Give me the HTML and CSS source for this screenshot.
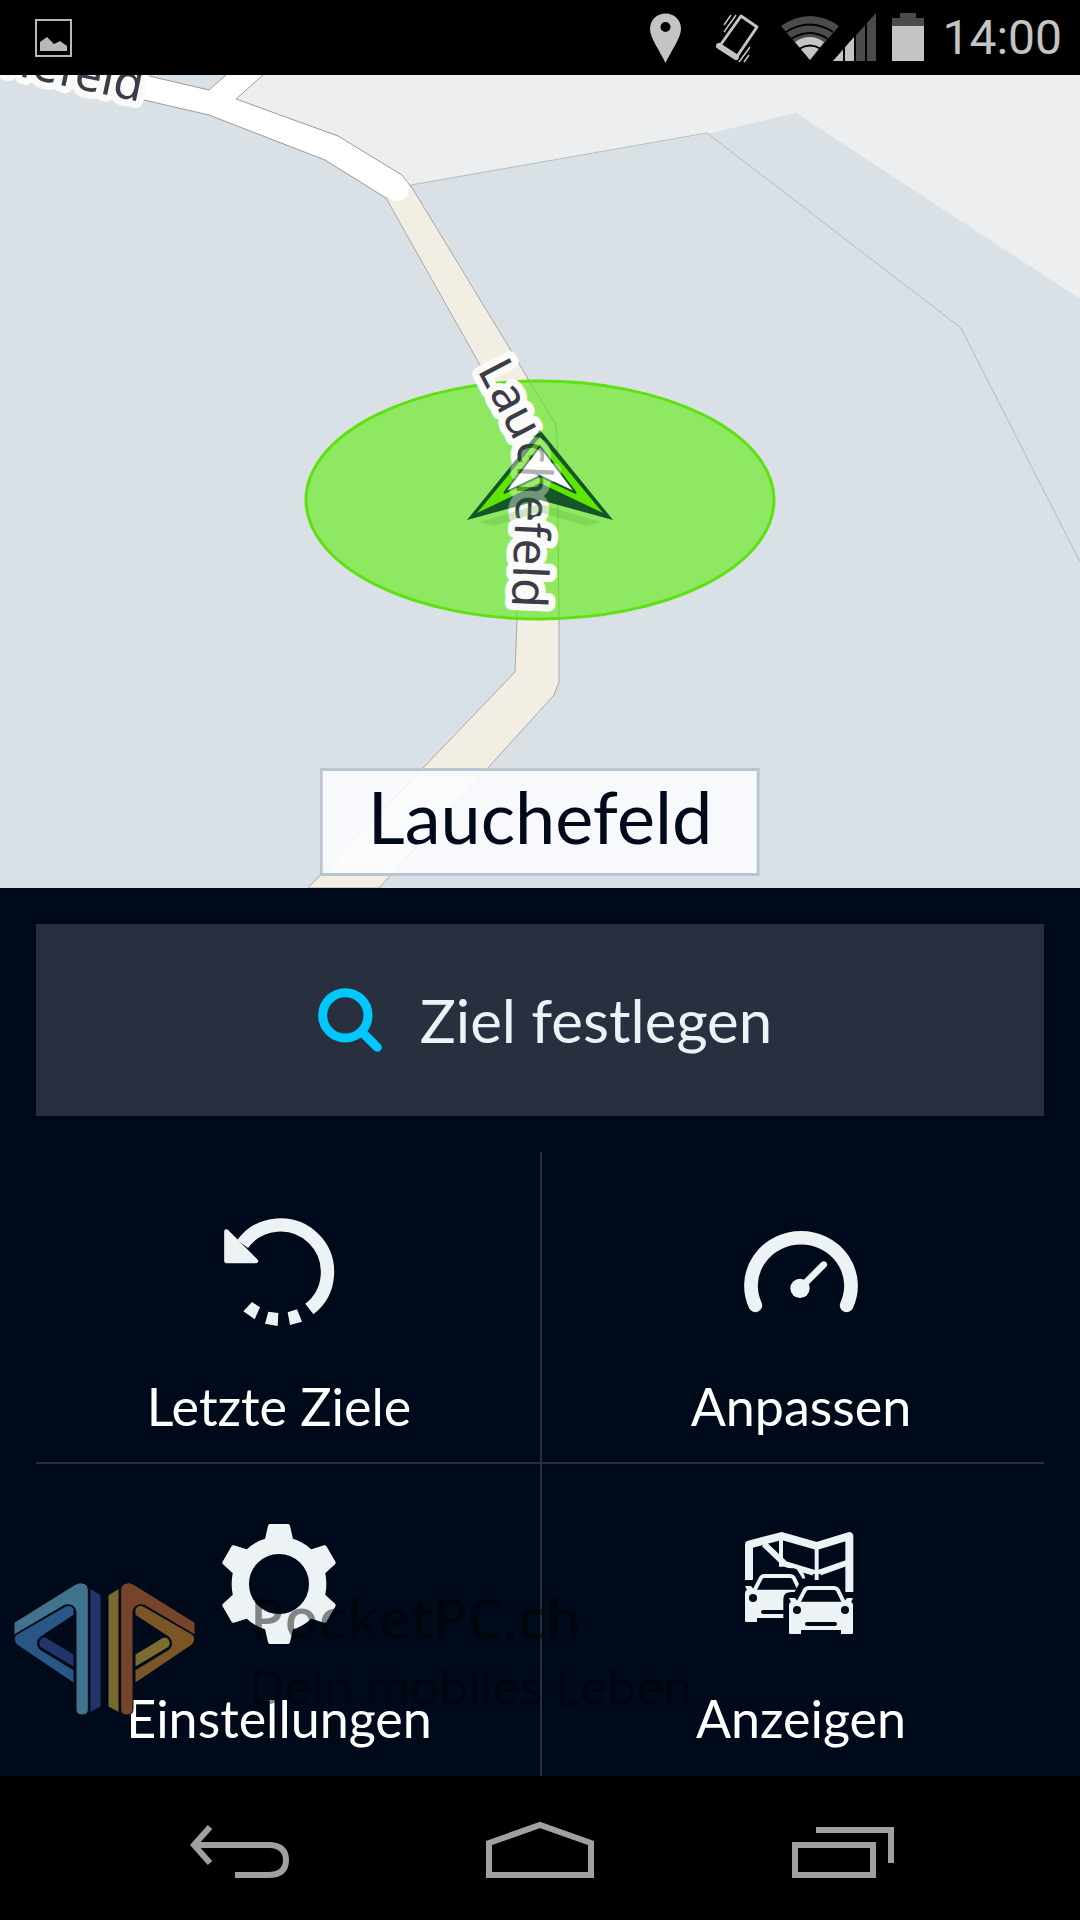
FILE: index.html
```html
<!DOCTYPE html>
<html lang="de">
<head>
  <meta charset="UTF-8">
  <meta name="viewport" content="width=device-width, initial-scale=1.0">
  <title>Lauchefeld</title>
  <link rel="stylesheet" href="styles.css">
</head>
<body>

  <!-- Status bar -->
  <header class="status-bar">
    <svg class="status-image" viewBox="35 19 38 38" width="38" height="38">
      <path d="M36 20h35v36H36z" fill="none" stroke="#b8b8b8" stroke-width="2"/>
      <path d="M40 51V42l7-5 7 7 6-3 7 5v5z" fill="#b8b8b8"/>
    </svg>
    <div class="status-icons">
      <svg viewBox="650 12 31 50" width="31" height="50">
        <path fill-rule="evenodd" d="M665.500 12.500c-9 0-15.500 6.500-15.500 15.500 0 9 10 22 15.500 34 5.500-12 15.500-25 15.500-34 0-9-6.500-15.500-15.500-15.500zm0 8.500a5 5 0 1 1 0 10 5 5 0 0 1 0-10z" fill="#c4c4c4"/>
      </svg>
      <svg viewBox="716 12 44 50" width="44" height="50">
        <g fill="none" stroke="#c4c4c4">
          <path d="M741 15l16 11-21 31-17-11z" stroke-width="3" stroke-linejoin="round"/>
          <path d="M719 45l17 11" stroke-width="6" stroke-linecap="round"/>
          <path d="M731 14l-7 10M736 14l-12 17M750 46l-11 15M749 54l-5 7" stroke-width="1.500"/>
        </g>
      </svg>
      <svg viewBox="780 12 97 50" width="97" height="50">
        <path d="M781 25q29-20 58 0l-29 34z" fill="#4b4b4b"/>
        <path d="M795 41q15-10 29 0l-14 18z" fill="#c4c4c4"/>
        <path d="M786 31q24-15 47 0M791 38q19-12 37 0M799 48q11-7 22 0" fill="none" stroke="#000" stroke-width="2"/>
        <path d="M833 60l43-48v48z" fill="#4b4b4b"/>
        <path d="M833 60l21-24v24z" fill="#c4c4c4"/>
        <path d="M844 12v48M855 12v48M866 12v48" stroke="#000" stroke-width="2"/>
      </svg>
      <svg class="status-battery" viewBox="892 12 32 50" width="32" height="50">
        <path d="M892 17h8v-5h16v5h8v43h-32z" fill="#4b4b4b"/>
        <path d="M892 25h32v35h-32z" fill="#c4c4c4"/>
      </svg>
      <time class="clock">14:00</time>
    </div>
  </header>

  <main>
    <!-- Map -->
    <section class="map">
      <svg class="map-canvas" viewBox="0 75 1080 813">
        <defs>
          <path id="street-path" d="M477 370L516 444Q518 448 518 456L511 622"/>
          <clipPath id="marker-clip">
            <path d="M540 430l73 90-73-20-73 20z"/>
          </clipPath>
        </defs>

        <rect x="0" y="75" width="1080" height="813" fill="#d9e0e6"/>
        <path d="M262 75H1080V299L796 113 707 134 411 185 338 135 236 99z" fill="#eceeef"/>
        <path d="M411 185L707 133 961 328 1080 562" fill="none" stroke="#b2bcbc"/>

        <!-- roads -->
        <path d="M386 198L520 436 517 620 515 672 308 888H379L554 695 559 682V600L557 436 555 423 411 186z" fill="#f2eee4" stroke="#aaa9a6"/>
        <path d="M0 60L149 76 209 90 226 75 263 75 236 99 338 136 402 175 411 187 386 198 325 160 209 115 144 100 0 72z" fill="#fff"/>
        <path d="M149 76L209 90 226 75M263 75L236 99 338 136 402 175 411 187M386 198L325 160 209 115 144 100" fill="none" stroke="#9a9c9e"/>
        <circle cx="397" cy="189" r="12" fill="#fff"/>

        <!-- position accuracy -->
        <ellipse cx="540" cy="500" rx="234" ry="119" fill="#8fe861" stroke="#5fe010" stroke-width="3"/>
        <path d="M527 378L555 423 557 436 559 620M517 600V620" fill="none" stroke="#78cc50"/>

        <text class="street" x="140" y="102" text-anchor="end" transform="rotate(12 140 102)">Lauchefeld</text>
        <text id="street-label" class="street"><textPath href="#street-path">Lauchefeld</textPath></text>

        <!-- own position -->
        <path d="M480 522l60-18 60 18-14 4-46-14-46 14z" fill="#4ea43a" opacity=".25"/>
        <path d="M540 430l73 90-73-20-73 20z" fill="#14562a"/>
        <path d="M540 437l63 76-63-30-63 30z" fill="#5ce600"/>
        <path d="M540 446l36 47-36-17-36 17z" fill="#fff" stroke="#14562a" stroke-width="2"/>
        <use href="#street-label" clip-path="url(#marker-clip)" opacity=".4"/>
      </svg>
      <div class="street-name">Lauchefeld</div>
    </section>

    <!-- Menu -->
    <section class="menu">
      <button class="search">
        <svg viewBox="112 202 192 192" width="64" height="64">
          <circle cx="194" cy="284" r="68" fill="none" stroke="#00c8ff" stroke-width="27"/>
          <path d="M244 334l46 46" stroke="#00c8ff" stroke-width="27" stroke-linecap="round"/>
        </svg>
        <span>Ziel festlegen</span>
      </button>

      <div class="tiles">
        <button class="tile">
          <svg viewBox="267 66 360 360" width="120" height="120" fill="#edf2f5">
            <path d="M338 162A141 141 0 1 1 538 357" fill="none" stroke="#edf2f5" stroke-width="40"/>
            <path d="M289 124L378 213H289z" stroke="#edf2f5" stroke-width="13" stroke-linejoin="round"/>
            <path d="M366 336l24 16-16 36-34-24zM415 365l30 4-2 39-38-7zM473 367l28-9 15 37-36 10z"/>
          </svg>
          <span>Letzte Ziele</span>
        </button>

        <button class="tile">
          <svg viewBox="213 66 360 360" width="120" height="120" fill="#edf2f5">
            <path d="M256 346A150 144 0 1 1 530 346" fill="none" stroke="#edf2f5" stroke-width="41" stroke-linecap="round"/>
            <circle cx="390" cy="295" r="29"/>
            <path d="M390 295L461 224" stroke="#edf2f5" stroke-width="20" stroke-linecap="round"/>
          </svg>
          <span>Anpassen</span>
        </button>

        <button class="tile">
          <svg viewBox="657 72 360 360" width="120" height="120" fill="#edf2f5">
            <defs>
              <path id="tooth" d="M795 118l9-41q1-5 6-5h54q5 0 6 5l9 41v30h-84z"/>
            </defs>
            <circle cx="837" cy="252" r="116" fill="none" stroke="#edf2f5" stroke-width="52"/>
            <use href="#tooth"/>
            <use href="#tooth" transform="rotate(60 837 252)"/>
            <use href="#tooth" transform="rotate(120 837 252)"/>
            <use href="#tooth" transform="rotate(180 837 252)"/>
            <use href="#tooth" transform="rotate(240 837 252)"/>
            <use href="#tooth" transform="rotate(300 837 252)"/>
          </svg>
          <span>Einstellungen</span>
        </button>

        <button class="tile">
          <svg viewBox="213 72 360 360" width="120" height="120" fill="#edf2f5">
            <defs>
              <g id="car">
                <path d="M357 315q0-10 12-10H537q12 0 12 10V398q0 4-4 4H513V390H393V402H361q-4 0-4-4z"/>
                <path d="M385 308L405 269Q408 264 415 264H492Q500 264 503 269L522 308" fill="none" stroke="#edf2f5" stroke-width="12"/>
                <path d="M357 294h18l10 13h-22zM549 294h-18l-10 13h22z"/>
                <circle cx="381" cy="330" r="12" fill="#000a1a"/>
                <circle cx="525" cy="330" r="12" fill="#000a1a"/>
                <path d="M411 372h84" stroke="#000a1a" stroke-width="12" stroke-linecap="round"/>
              </g>
            </defs>
            <g fill="none" stroke="#edf2f5" stroke-linejoin="round">
              <path d="M237 241V134L335 108 440 138 538 108V276" stroke-width="24"/>
              <path d="M333 112V200M440 140V240" stroke-width="12"/>
              <path d="M282 132L345 192 440 221 530 189" stroke-width="18"/>
              <path d="M328 190L365 196Q395 210 400 236" stroke-width="12"/>
            </g>
            <path d="M225 241h22l14-26q5-10 16-10h92q10 0 16 10l18 30-60 30H225z" fill="#000a1a"/>
            <use href="#car" transform="translate(-132 -36)"/>
            <path d="M340 405V298q0-22 24-22h10l14-26q5-10 16-10h94q10 0 16 10l12 26h33v30H380v100z" fill="#000a1a"/>
            <path d="M428 222h24v18h-24z" fill="#000a1a"/>
            <path d="M434 210h12v30h-12z"/>
            <use href="#car"/>
          </svg>
          <span>Anzeigen</span>
        </button>
      </div>

      <!-- Watermark -->
      <div class="watermark">
        <svg viewBox="39 246 549 402" width="183" height="134">
          <g fill="#41738f" stroke="#000a1a" stroke-width="3">
            <path d="M42 405V372Q42 368 46 365L226 253Q240 244 254 251 265 257 265 268V628Q265 645 247 645 228 645 228 628V335Q224 310 195 315z"/>
            <path d="M222 345V328Q214 310 194 320L50 403Q36 416 50 434L222 550V510L120 448Q104 430 120 412z" fill="#2a5684"/>
            <path d="M120 418Q128 408 138 412L222 463V502L120 441Q112 430 120 418z" fill="#21356a"/>
            <path d="M270 265L303 285V620L270 638z" fill="#21356a"/>
          </g>
          <g transform="translate(627 0) scale(-1 1)" fill="#75442a" stroke="#000a1a" stroke-width="3">
            <path d="M42 405V372Q42 368 46 365L226 253Q240 244 254 251 265 257 265 268V628Q265 645 247 645 228 645 228 628V335Q224 310 195 315z"/>
            <path d="M222 345V328Q214 310 194 320L50 403Q36 416 50 434L222 550V510L120 448Q104 430 120 412z" fill="#7a5627"/>
            <path d="M120 418Q128 408 138 412L222 463V502L120 441Q112 430 120 418z" fill="#7c6c30"/>
            <path d="M270 265L303 285V620L270 638z" fill="#7a6a30"/>
          </g>
        </svg>
        <div class="watermark-text">
          <strong>PocketPC.ch</strong>
          <span>Dein mobiles Leben</span>
        </div>
      </div>
    </section>
  </main>

  <!-- Navigation bar -->
  <nav class="nav-bar">
    <button aria-label="Zurück">
      <svg viewBox="180 1818 120 60" width="120" height="60">
        <path d="M210 1827L194 1845 210 1863M194 1845H270Q286 1846 286 1860 286 1875 268 1875H235" fill="none" stroke="#a0a0a0" stroke-width="6"/>
      </svg>
    </button>
    <button aria-label="Startseite">
      <svg viewBox="480 1818 120 60" width="120" height="60">
        <path d="M489 1843L540 1825 591 1843V1875H489z" fill="none" stroke="#a0a0a0" stroke-width="6"/>
      </svg>
    </button>
    <button aria-label="Letzte Apps">
      <svg viewBox="780 1818 120 60" width="120" height="60">
        <path d="M795 1845h78v30h-78zM816 1830h75v33" fill="none" stroke="#a0a0a0" stroke-width="6"/>
      </svg>
    </button>
  </nav>

</body>
</html>
```

FILE: styles.css
```css
* {
  box-sizing: border-box;
}

body {
  margin: 0;
  background: #000;
  font-family: Lato, "Open Sans", sans-serif;
  color: #fff;
}

svg {
  display: block;
  flex-shrink: 0;
}

button {
  padding: 0;
  border: none;
  background: none;
  color: inherit;
  font-family: inherit;
  cursor: pointer;
}

/* Status bar */
.status-bar {
  display: flex;
  align-items: center;
  justify-content: space-between;
  height: 75px;
  padding: 0 18px 0 35px;
}

.status-icons {
  display: flex;
  align-items: center;
  gap: 20px;
}

.status-icons svg:first-child {
  margin-right: 15px;
}

.status-battery {
  margin: 0 -2px 0 -5px;
}

.clock {
  font-family: Roboto, sans-serif;
  font-size: 48px;
  line-height: 56px;
  color: #c4c4c4;
}

/* Map */
.map {
  position: relative;
}

.map-canvas {
  width: 100%;
  height: auto;
}

.street {
  font-family: "Noto Sans", sans-serif;
  font-size: 48px;
  fill: #3c3c48;
  stroke: #fafaf8;
  stroke-width: 14px;
  stroke-linejoin: round;
  paint-order: stroke;
}

.street-name {
  position: absolute;
  bottom: 12px;
  left: 50%;
  transform: translateX(-50%);
  padding: 0 45px 12px;
  border: 3px solid #b9c5cf;
  background: rgba(252, 253, 255, 0.85);
  color: #000a1a;
  font-size: 72px;
  line-height: 90px;
}

/* Menu */
.menu {
  position: relative;
  padding: 36px 36px 0;
  background: #000a1a;
}

.search {
  display: flex;
  align-items: center;
  justify-content: center;
  gap: 38px;
  width: 100%;
  height: 192px;
  padding-left: 10px;
  background: #283040;
  color: #edf2f6;
  font-size: 60px;
}

.tiles {
  display: grid;
  grid-template-columns: 1fr 1fr;
  margin-top: 36px;
}

.tile {
  display: flex;
  flex-direction: column;
  align-items: center;
  gap: 42px;
  height: 312px;
  padding-top: 60px;
  font-size: 52px;
  line-height: 64px;
}

.tile:nth-child(odd) {
  padding-right: 18px;
}

.tile:nth-child(even) {
  padding-left: 16px;
  border-left: 2px solid #283040;
}

.tile:nth-child(-n+2) {
  border-bottom: 2px solid #283040;
}

/* Watermark */
.watermark {
  position: absolute;
  left: 13px;
  bottom: 54px;
  display: flex;
  gap: 54px;
  pointer-events: none;
}

.watermark-text {
  display: flex;
  flex-direction: column;
  font-family: "Open Sans", sans-serif;
  font-size: 48px;
  line-height: 70px;
  color: rgba(0, 0, 0, 0.45);
  white-space: nowrap;
}

.watermark-text strong {
  font-size: 56px;
  font-weight: 600;
}

/* Navigation bar */
.nav-bar {
  display: flex;
  justify-content: center;
  height: 144px;
}

.nav-bar button {
  display: flex;
  align-items: center;
  justify-content: center;
  width: 300px;
}
```
